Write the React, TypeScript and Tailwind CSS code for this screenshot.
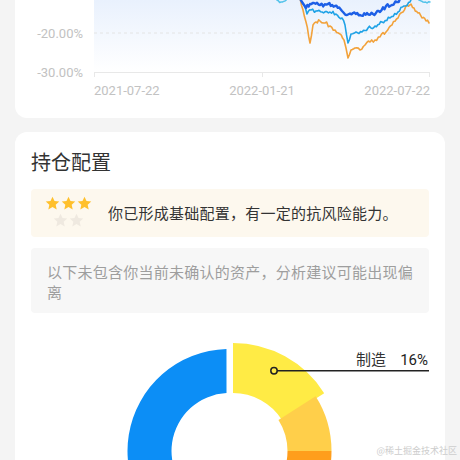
import React from "react";

type P = [number, number];

function rng(seed: number) {
  let s = seed;
  return () => {
    s = (s * 1103515245 + 12345) % 2147483648;
    return s / 2147483648;
  };
}

function jagged(points: P[], seed: number, amp: number, step = 1.5): string {
  const r = rng(seed);
  const out: P[] = [];
  for (let i = 0; i < points.length - 1; i++) {
    const [x0, y0] = points[i];
    const [x1, y1] = points[i + 1];
    const n = Math.max(1, Math.round((x1 - x0) / step));
    for (let k = 0; k < n; k++) {
      const t = k / n;
      const x = x0 + (x1 - x0) * t;
      const y = y0 + (y1 - y0) * t + (k === 0 ? 0 : (r() - 0.5) * 2 * amp);
      out.push([x, y]);
    }
  }
  out.push(points[points.length - 1]);
  return out.map((p, i) => `${i === 0 ? "M" : "L"}${(p[0] - 15).toFixed(2)} ${p[1].toFixed(2)}`).join(" ");
}

const darkBlue: P[] = [
  [288, -15], [298, -5], [302, 2], [306, 8], [310, 4], [314, 3], [320, 5], [328, 4], [335, 6], [342, 11],
  [347, 15], [353, 13], [360, 15], [367, 13], [373, 14], [380, 12], [386, 6], [392, 5], [397, 2], [402, -2], [410, -10],
];
const midBlue: P[] = [
  [285, -10], [300, -2], [304, 5], [307, 14], [311, 10], [316, 11], [322, 12], [330, 12], [336, 14], [342, 18],
  [345, 25], [348, 43], [351, 34], [356, 32], [362, 32], [368, 28], [375, 26], [382, 22], [390, 18], [398, 12],
  [404, 6], [410, 2], [414, -2], [420, -6],
];
const cyan1: P[] = [[406, -10], [414, -4], [419, 0], [423, 2], [427, 3], [430, 2]];
const cyan2: P[] = [[272, -6], [277, 0], [281, 2], [285, 1], [289, -5]];
const orange: P[] = [
  [290, -6], [300, -2], [303, 10], [306, 22], [310, 43], [313, 25], [316, 22], [320, 21], [325, 23], [330, 26],
  [335, 30], [340, 34], [344, 40], [346, 48], [348, 58], [351, 50], [355, 48], [360, 50], [365, 45], [370, 42],
  [375, 40], [380, 37], [386, 32], [392, 25], [398, 18], [403, 12], [407, 5], [411, 4], [414, 8], [418, 13],
  [422, 18], [426, 21], [429, 23],
];

function pt(cx: number, cy: number, r: number, a: number): P {
  const rad = (a * Math.PI) / 180;
  return [cx + r * Math.sin(rad), cy - r * Math.cos(rad)];
}

function sector(cx: number, cy: number, r0: number, r1: number, a0o: number, a1o: number, a0i: number, a1i: number) {
  const o0 = pt(cx, cy, r1, a0o);
  const o1 = pt(cx, cy, r1, a1o);
  const i1 = pt(cx, cy, r0, a1i);
  const i0 = pt(cx, cy, r0, a0i);
  const lo = a1o - a0o > 180 ? 1 : 0;
  const li = a1i - a0i > 180 ? 1 : 0;
  return `M${o0[0]} ${o0[1]} A${r1} ${r1} 0 ${lo} 1 ${o1[0]} ${o1[1]} L${i1[0]} ${i1[1]} A${r0} ${r0} 0 ${li} 0 ${i0[0]} ${i0[1]} Z`;
}

function Star({ color }: { color: string }) {
  return (
    <svg width="15" height="15" viewBox="0 0 24 24">
      <path d="M12 1l3.2 7 7.6.8-5.7 5.2 1.6 7.5L12 17.7l-6.7 3.8 1.6-7.5L1.2 8.8 8.8 8z" fill={color} />
    </svg>
  );
}

function Chart() {
  return (
    <svg width="430" height="118" viewBox="0 0 430 118" className="block">
      <defs>
        <linearGradient id="bgGrad" x1="0" y1="0" x2="0" y2="1">
          <stop offset="0" stopColor="#e9f1fd" />
          <stop offset="1" stopColor="#ffffff" />
        </linearGradient>
      </defs>
      <rect x="79" y="0" width="336" height="72" fill="url(#bgGrad)" />
      <line x1="79" y1="33" x2="415" y2="33" stroke="#e4e4e4" strokeWidth="1" strokeDasharray="3 3" />
      <line x1="79" y1="72.5" x2="415" y2="72.5" stroke="#e8e8e8" strokeWidth="1" />
      <line x1="79.5" y1="72" x2="79.5" y2="77" stroke="#e8e8e8" strokeWidth="1" />
      <line x1="247.5" y1="72" x2="247.5" y2="77" stroke="#e8e8e8" strokeWidth="1" />
      <line x1="414.5" y1="72" x2="414.5" y2="77" stroke="#e8e8e8" strokeWidth="1" />
      <g fontFamily="Roboto, 'Noto Sans', sans-serif" fontSize="13" fill="#c2c2c2">
        <text x="68" y="37.5" textAnchor="end">-20.00%</text>
        <text x="68" y="76.5" textAnchor="end">-30.00%</text>
        <text x="79" y="95" textAnchor="start">2021-07-22</text>
        <text x="247" y="95" textAnchor="middle">2022-01-21</text>
        <text x="415" y="95" textAnchor="end">2022-07-22</text>
      </g>
      <g fill="none" strokeLinejoin="round" strokeLinecap="round">
        <path d={jagged(cyan2, 7, 1.2)} stroke="#54c3ea" strokeWidth="1.5" />
        <path d={jagged(orange, 11, 2)} stroke="#f2a23b" strokeWidth="1.6" />
        <path d={jagged(midBlue, 23, 1.8)} stroke="#1fa2e6" strokeWidth="1.6" />
        <path d={jagged(cyan1, 5, 1.2)} stroke="#54c3ea" strokeWidth="1.5" />
        <path d={jagged(darkBlue, 37, 1.8)} stroke="#1d5fe6" strokeWidth="2.4" />
      </g>
    </svg>
  );
}

function Donut() {
  const cx = 214.5;
  const cy = 138;
  return (
    <svg width="430" height="147" viewBox="0 0 430 147" className="block">
      <path d={sector(cx, cy, 58, 102, 200, 358.3, 200, 357.04)} fill="#0c8ef6" />
      <path d={sector(cx + 3.5, cy, 58, 108, 0, 57.6, 0, 57.6)} fill="#ffeb45" />
      <path d={sector(cx, cy, 58, 102, 57.6, 90, 57.6, 90)} fill="#ffcf4a" />
      <path d={sector(cx, cy, 58, 102, 90, 140, 90, 140)} fill="#ff9e1c" />
      <line x1="262" y1="57.7" x2="414" y2="57.7" stroke="#222" strokeWidth="1.6" />
      <circle cx="259" cy="57.7" r="3.2" fill="#ffeb45" stroke="#222" strokeWidth="1.5" />
      <text x="341" y="52" fontSize="15" fill="#333" fontFamily="'Noto Sans CJK SC', sans-serif">制造</text>
      <text x="413" y="52" fontSize="15" fill="#222" textAnchor="end" fontFamily="Roboto, sans-serif">16%</text>
    </svg>
  );
}

export default function App() {
  return (
    <div className="relative w-[460px] h-[460px] overflow-hidden bg-[#f4f4f4] px-[15px] flex flex-col gap-[14px] font-['Noto_Sans_CJK_SC',sans-serif]">
      <div className="h-[118px] shrink-0 bg-white rounded-b-[12px] overflow-hidden">
        <Chart />
      </div>
      <div className="flex-1 bg-white rounded-t-[12px] px-[16px] pt-[16px] flex flex-col">
        <div className="text-[20px] leading-[28px] text-[#333]">持仓配置</div>
        <div className="mt-[13px] h-[48px] bg-[#fdf8ee] rounded-[4px] pl-[14px] flex items-center">
          <div className="flex flex-col items-center gap-[2px] mt-[-3px]">
            <div className="flex gap-[1px]">
              <Star color="#ffc02c" />
              <Star color="#ffc02c" />
              <Star color="#ffc02c" />
            </div>
            <div className="flex gap-[1px]">
              <Star color="#efe9e0" />
              <Star color="#efe9e0" />
            </div>
          </div>
          <div className="ml-[16px] text-[15px] tracking-[0.25px] leading-[20px] text-[#333]">你已形成基础配置，有一定的抗风险能力。</div>
        </div>
        <div className="mt-[11px] h-[65px] bg-[#f7f7f7] rounded-[4px] pl-[16px] pr-[12px] pt-[14px] text-[15px] tracking-[0.25px] leading-[20px] text-[#9e9e9e]">
          以下未包含你当前未确认的资产，分析建议可能出现偏离
        </div>
        <div className="mx-[-16px]">
          <Donut />
        </div>
      </div>
      <div className="absolute right-[3px] bottom-[3px] text-[9px] leading-[12px] text-[#cdcdcd]">@稀土掘金技术社区</div>
    </div>
  );
}
